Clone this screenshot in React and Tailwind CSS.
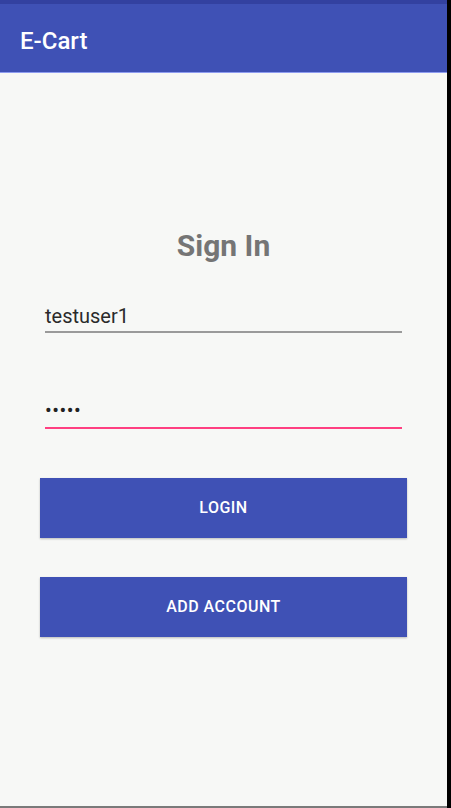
import React from 'react';

const roboto = { fontFamily: 'Roboto, "Noto Sans", sans-serif' };

function UnderlineField({ value, active, masked }) {
  return (
    <div>
      <div
        className={`h-[28px] leading-[28px] ${
          masked ? 'text-[20px] tracking-[0.5px] text-[#222]' : 'text-[20px] text-[#2a2a2a]'
        }`}
      >
        {value}
      </div>
      {active ? (
        <div className="mt-[3px] h-[2px] bg-[#ff4081]" />
      ) : (
        <div className="mt-[1px] h-[2px] bg-[#9a9a9a]" />
      )}
    </div>
  );
}

function PrimaryButton({ children }) {
  return (
    <button className="mx-[40px] flex h-[60px] items-center justify-center bg-[#3f51b5] text-[16px] font-medium tracking-[0.5px] text-white shadow-[0_1px_2px_rgba(0,0,0,0.25)]">
      {children}
    </button>
  );
}

export default function App() {
  return (
    <div className="flex h-[808px] w-[451px] overflow-hidden" style={roboto}>
      <div className="flex w-[447px] flex-col">
        {/* status bar */}
        <div className="h-[4px] bg-[#3341a0]" />

        {/* toolbar */}
        <div className="h-[68px] bg-[#3f51b5] pl-5 pt-[21px]">
          <h1 className="text-[24px] font-medium leading-[32px] text-white">E-Cart</h1>
        </div>
        <div className="h-px bg-[#8e9cf0]" />

        {/* sign in form */}
        <div className="flex flex-1 flex-col bg-[#f7f8f6] pt-[155px]">
          <h2 className="text-center text-[30px] font-bold leading-[36px] text-[#757575]">Sign In</h2>

          <div className="mx-[45px] mt-[38px]">
            <UnderlineField value="testuser1" />
          </div>

          <div className="mx-[45px] mt-[63px]">
            <UnderlineField value="•••••" masked active />
          </div>

          <div className="mt-[49px] flex flex-col">
            <PrimaryButton>LOGIN</PrimaryButton>
            <div className="h-[39px]" />
            <PrimaryButton>ADD ACCOUNT</PrimaryButton>
          </div>
        </div>

        <div className="h-[2px] bg-[#7a7a7a]" />
      </div>
      <div className="w-[4px] bg-black" />
    </div>
  );
}
